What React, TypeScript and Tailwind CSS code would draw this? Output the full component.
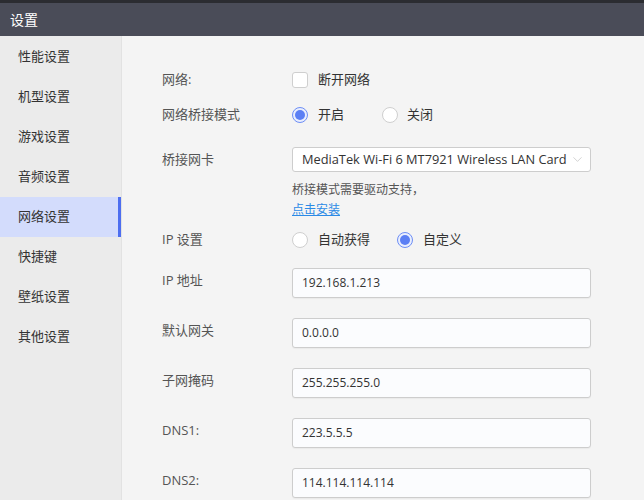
import { ChevronDown } from "lucide-react";

const menu = [
  "性能设置",
  "机型设置",
  "游戏设置",
  "音频设置",
  "网络设置",
  "快捷键",
  "壁纸设置",
  "其他设置"
];

const fields = [
  { label: "IP 地址", value: "192.168.1.213" },
  { label: "默认网关", value: "0.0.0.0" },
  { label: "子网掩码", value: "255.255.255.0" },
  { label: "DNS1:", value: "223.5.5.5" },
  { label: "DNS2:", value: "114.114.114.114" }
];

function Radio({ checked, className = "" }: { checked?: boolean; className?: string }) {
  return checked ? (
    <span className={`flex h-[16px] w-[16px] shrink-0 items-center justify-center rounded-full border border-[#6d8ef5] bg-[#e9eefe] ${className}`}>
      <span className="block h-[10px] w-[10px] rounded-full bg-[#5b7ff4]" />
    </span>
  ) : (
    <span className={`block h-[16px] w-[16px] shrink-0 rounded-full border border-[#cfcfcf] bg-white ${className}`} />
  );
}

function Row({ label, children, className = "" }: { label: string; children: React.ReactNode; className?: string }) {
  return (
    <div className={`flex items-center ${className}`}>
      <div className="w-[130px] shrink-0 text-[13px] text-[#555]">{label}</div>
      <div className="flex items-center">{children}</div>
    </div>
  );
}

export default function App() {
  return (
    <div
      className="flex h-[500px] w-[644px] flex-col overflow-hidden bg-[#f4f4f4]"
      style={{ fontFamily: '"Open Sans", "Noto Sans CJK SC", sans-serif' }}
    >
      <header className="flex h-[36px] shrink-0 items-center border-t-[3px] border-[#2b2c31] bg-[#4a4c58] px-[10px] text-[14px] text-white">
        设置
      </header>

      <div className="flex flex-1">
        <aside className="w-[122px] shrink-0 border-r border-[#e2e2e2] bg-[#ebebeb] pt-px">
          {menu.map((item) => {
            const active = item === "网络设置";
            return (
              <div
                key={item}
                className={`flex h-10 items-center pl-[18px] text-[13px] text-[#333] ${
                  active ? "border-r-[3px] border-[#4d6ef0] bg-[#d3dcfc]" : ""
                }`}
              >
                {item}
              </div>
            );
          })}
        </aside>

        <main className="flex-1 pl-[40px] pt-[34px]">
          <Row label="网络:" className="h-5">
            <span className="block h-[16px] w-[16px] shrink-0 rounded-[3px] border border-[#cfcfcf] bg-white" />
            <span className="ml-[10px] text-[13px] text-[#333]">断开网络</span>
          </Row>

          <Row label="网络桥接模式" className="mt-[15px] h-5">
            <Radio checked />
            <span className="ml-[10px] text-[13px] text-[#333]">开启</span>
            <Radio className="ml-[38px]" />
            <span className="ml-[9px] text-[13px] text-[#333]">关闭</span>
          </Row>

          <Row label="桥接网卡" className="mt-[22px] h-[25px]">
            <div className="flex h-[25px] w-[299px] items-center justify-between whitespace-nowrap rounded-[3px] border border-[#cdcdcd] bg-white pl-[9px] pr-[5px] text-[12.8px] text-[#333]">
              <span>MediaTek Wi-Fi 6 MT7921 Wireless LAN Card</span>
              <ChevronDown size={15} strokeWidth={1} className="shrink-0 text-[#b8b8b8]" />
            </div>
          </Row>

          <div className="ml-[130px] mt-[8px] text-[12px] leading-5 text-[#555]">
            <div>桥接模式需要驱动支持，</div>
            <div className="text-[#2b8ae6] underline">点击安装</div>
          </div>

          <Row label="IP 设置" className="mt-[10px] h-5">
            <Radio />
            <span className="ml-[10px] text-[13px] text-[#333]">自动获得</span>
            <Radio checked className="ml-[27px]" />
            <span className="ml-[10px] text-[13px] text-[#333]">自定义</span>
          </Row>

          {fields.map((f, i) => (
            <div key={f.label} className={`flex items-center ${i === 0 ? "mt-[18px]" : "mt-[20px]"}`}>
              <div className="w-[130px] shrink-0 pb-[5px] text-[13px] text-[#555]">{f.label}</div>
              <div className="flex h-[30px] w-[299px] items-center rounded-[3px] border border-[#cdcdcd] bg-[#fbfcfe] pl-[9px] text-[12px] text-[#333] shadow-[0_1px_1px_rgba(0,0,0,0.04)]">
                {f.value}
              </div>
            </div>
          ))}
        </main>
      </div>
    </div>
  );
}
